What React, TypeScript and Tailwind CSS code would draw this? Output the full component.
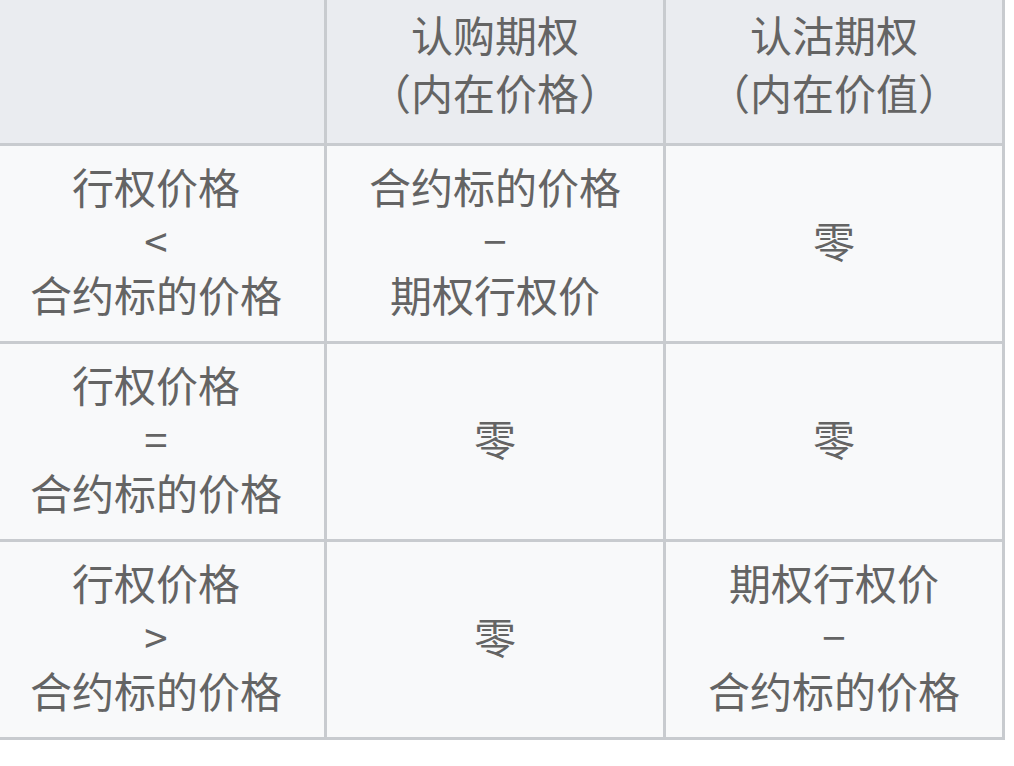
const rows: { cond: string[]; call: string[]; put: string[] }[] = [
  {
    cond: ["行权价格", "<", "合约标的价格"],
    call: ["合约标的价格", "−", "期权行权价"],
    put: ["零"],
  },
  {
    cond: ["行权价格", "=", "合约标的价格"],
    call: ["零"],
    put: ["零"],
  },
  {
    cond: ["行权价格", ">", "合约标的价格"],
    call: ["零"],
    put: ["期权行权价", "−", "合约标的价格"],
  },
];

const Lines = ({ lines }: { lines: string[] }) => (
  <>
    {lines.map((l, i) => (
      <div key={i}>{l}</div>
    ))}
  </>
);

export default function App() {
  return (
    <div
      className="w-[1014px] h-[766px] overflow-hidden bg-white"
      style={{ fontFamily: '"Noto Sans CJK SC", "Noto Sans", sans-serif' }}
    >
      <table className="-ml-[15px] -mt-[10px] border-collapse text-[42px] leading-[54px] text-[#646464] table-fixed">
        <colgroup>
          <col className="w-[339px]" />
          <col className="w-[339px]" />
          <col className="w-[339px]" />
        </colgroup>
        <thead>
          <tr className="h-[153px] bg-[#eaecf0]">
            <th className="border-[3px] border-[#c8cbcf] font-normal leading-[58px] text-center align-middle"></th>
            <th className="border-[3px] border-[#c8cbcf] font-normal leading-[58px] text-center align-middle pb-[10px]">
              <div>认购期权</div>
              <div>（内在价格）</div>
            </th>
            <th className="border-[3px] border-[#c8cbcf] font-normal leading-[58px] text-center align-middle pb-[10px]">
              <div>认沽期权</div>
              <div>（内在价值）</div>
            </th>
          </tr>
        </thead>
        <tbody>
          {rows.map((r, i) => (
            <tr key={i} className="h-[198px] bg-[#f8f9fa]">
              <td className="border-[3px] border-[#c8cbcf] text-center align-middle pb-[7px]">
                <Lines lines={r.cond} />
              </td>
              <td className="border-[3px] border-[#c8cbcf] text-center align-middle pb-[7px]">
                <Lines lines={r.call} />
              </td>
              <td className="border-[3px] border-[#c8cbcf] text-center align-middle pb-[7px]">
                <Lines lines={r.put} />
              </td>
            </tr>
          ))}
        </tbody>
      </table>
    </div>
  );
}
